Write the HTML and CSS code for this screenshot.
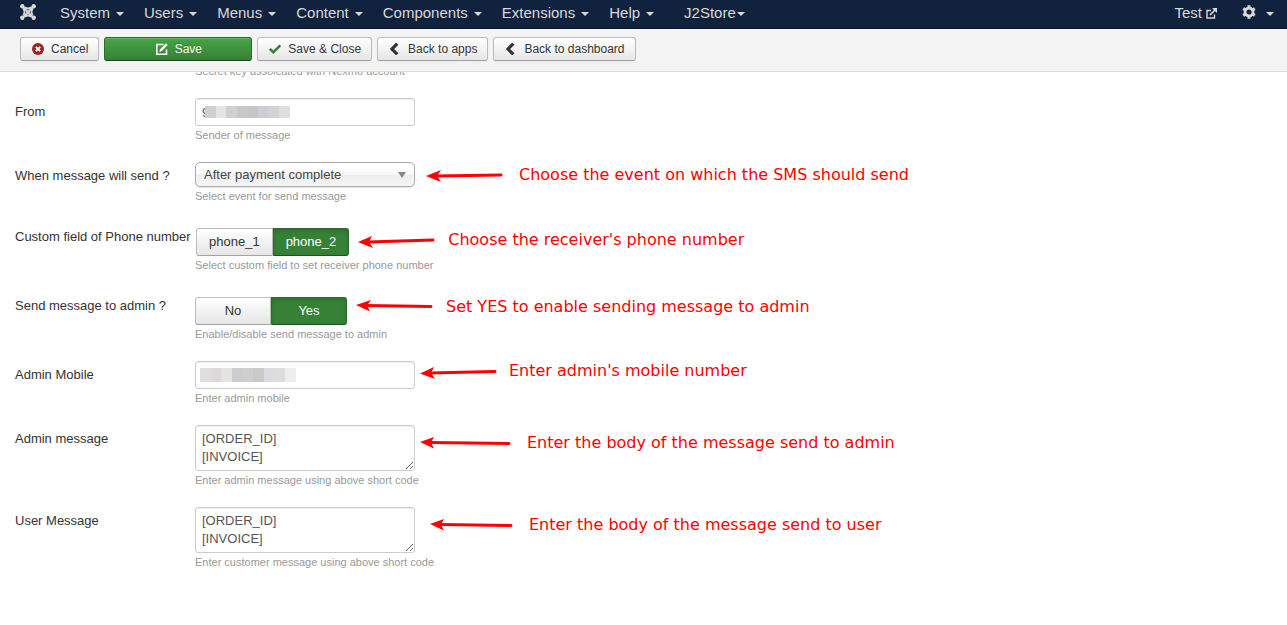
FILE: index.html
```html
<!DOCTYPE html>
<html lang="en">
<head>
<meta charset="utf-8">
<title>J2Store SMS settings</title>
<meta name="viewport" content="width=device-width, initial-scale=1">
<link rel="stylesheet" href="styles.css">
</head>
<body>
<svg class="defs" width="0" height="0" aria-hidden="true">
  <symbol id="chevron" viewBox="0 0 12 12"><path d="M8.3.6 3 6l5.300 5.400" fill="none" stroke="#333" stroke-width="3.200"/></symbol>
</svg>

<header class="navbar">
  <a class="brand" href="#" aria-label="Control panel">
    <svg width="16" height="16" viewBox="0 0 16 16" fill="none" stroke="#d9d9d9">
      <path d="M2.500 2.500 10 10.200q1.700 1.700 3.400 3.300M13.500 2.500 6 10.200q-1.700 1.700-3.400 3.300" stroke-width="2.200"/>
      <path d="M5 3.200Q8 5.800 11 3.200M5 12.800Q8 10.200 11 12.800M3.200 5Q5.800 8 3.200 11M12.800 5Q10.200 8 12.800 11" stroke-width="1.700"/>
      <g fill="#d9d9d9" stroke="none"><circle cx="2.300" cy="2.300" r="2.200"/><circle cx="13.700" cy="2.300" r="2.200"/><circle cx="2.300" cy="13.700" r="2.200"/><circle cx="13.700" cy="13.700" r="2.200"/></g>
    </svg>
  </a>
  <nav class="menu" aria-label="Main">
    <a href="#">System<span class="caret"></span></a>
    <a href="#">Users<span class="caret"></span></a>
    <a href="#">Menus<span class="caret"></span></a>
    <a href="#">Content<span class="caret"></span></a>
    <a href="#">Components<span class="caret"></span></a>
    <a href="#">Extensions<span class="caret"></span></a>
    <a href="#">Help<span class="caret"></span></a>
    <a class="menu-extra" href="#">J2Store<span class="caret"></span></a>
  </nav>
  <nav class="menu menu-end" aria-label="Site">
    <a class="site-link" href="#">Test
      <svg width="11" height="11" viewBox="0 0 11 11" fill="none" stroke="#d9d9d9" stroke-width="1.400"><path d="M5 2.500H1v7.500h7.500V6.500"/><path d="M4 7 9 2" stroke-width="1.700"/><path d="M6 0h5v5L9.300 3.300 7.700 1.700z" fill="#d9d9d9" stroke="none"/></svg>
    </a>
    <a class="user-link" href="#" aria-label="User menu">
      <svg width="14" height="14" viewBox="0 0 14 14"><circle cx="7" cy="7" r="4" fill="none" stroke="#d9d9d9" stroke-width="2.800"/><path d="M7 .3v2.500M7 11.200v2.500M1.200 3.600l2.200 1.300M10.600 9.100l2.200 1.300M1.200 10.400l2.200-1.300M10.600 4.900l2.200-1.300" stroke="#d9d9d9" stroke-width="3"/></svg>
      <span class="caret"></span>
    </a>
  </nav>
</header>

<div class="toolbar">
  <button class="btn" type="button"><svg width="12" height="12" viewBox="0 0 12 12"><circle cx="6" cy="6" r="6" fill="#942a25"/><path d="m3.800 3.800 4.400 4.400m0-4.400L3.800 8.200" stroke="#fff" stroke-width="1.900"/></svg>Cancel</button>
  <button class="btn btn-primary" type="button"><svg width="12" height="12" viewBox="0 0 12 12" fill="none" stroke="#fff"><path d="M7.500 1.500H.8v9.700h9.700V6.500" stroke-width="1.600"/><path d="M3.300 8.900 4 6.400 10 .3l1.700 1.700-6 6.100z" fill="#fff" stroke="none"/></svg>Save</button>
  <button class="btn" type="button"><svg width="12" height="12" viewBox="0 0 12 12"><path d="m.8 6 3.500 3.300 7-7" fill="none" stroke="#378137" stroke-width="2.600"/></svg>Save &amp; Close</button>
  <button class="btn" type="button"><svg width="12" height="12"><use href="#chevron"/></svg>Back to apps</button>
  <button class="btn" type="button"><svg width="12" height="12"><use href="#chevron"/></svg>Back to dashboard</button>
</div>

<main>
  <form class="settings">
    <div class="group">
      <p class="help help-first">Secret key assoicated with Nexmo account</p>
    </div>

    <div class="group">
      <label class="name" for="from">From</label>
      <div class="field">
        <div class="control">
          <input class="box" id="from" type="text" value="9">
          <span class="mask mask-from"><i></i><i></i><i></i><i></i><i></i><i></i><i></i><i></i></span>
        </div>
        <p class="help">Sender of message</p>
      </div>
    </div>

    <div class="group">
      <label class="name" for="event">When message will send ?</label>
      <div class="field">
        <div class="line">
          <div class="control">
            <select class="picker" id="event"><option>After payment complete</option></select>
            <svg class="picker-arrow" width="8" height="6" viewBox="0 0 8 6"><path d="M0 0h8L4 6z" fill="#888"/></svg>
          </div>
          <div class="note note-event">
            <svg width="77" height="20" viewBox="0 0 77 20"><path d="M10 11 75 10" class="shaft"/><path d="M0 11 15 5l-4 6 4 6z" class="tip"/></svg>
            <span>Choose the event on which the SMS should send</span>
          </div>
        </div>
        <p class="help">Select event for send message</p>
      </div>
    </div>

    <div class="group">
      <span class="name" id="phone-name">Custom field of Phone number</span>
      <div class="field field-toggle">
        <div class="line">
          <div class="toggle toggle-phone" role="radiogroup" aria-labelledby="phone-name">
            <input type="radio" name="phone" id="phone1"><label for="phone1">phone_1</label>
            <input type="radio" name="phone" id="phone2" checked><label for="phone2">phone_2</label>
          </div>
          <div class="note note-phone">
            <svg width="77" height="20" viewBox="0 0 77 20"><path d="M10 12 75 10" class="shaft"/><path d="M0 12 14 6l-3 6 4 6z" class="tip"/></svg>
            <span>Choose the receiver's phone number</span>
          </div>
        </div>
        <p class="help">Select custom field to set receiver phone number</p>
      </div>
    </div>

    <div class="group">
      <span class="name" id="admin-name">Send message to admin ?</span>
      <div class="field field-toggle">
        <div class="line">
          <div class="toggle" role="radiogroup" aria-labelledby="admin-name">
            <input type="radio" name="admin" id="admin-no"><label for="admin-no">No</label>
            <input type="radio" name="admin" id="admin-yes" checked><label for="admin-yes">Yes</label>
          </div>
          <div class="note note-admin">
            <svg width="77" height="20" viewBox="0 0 77 20"><path d="M10 8.500 75 9.500" class="shaft"/><path d="M0 8 15 3l-4 5.500 3 6z" class="tip"/></svg>
            <span>Set YES to enable sending message to admin</span>
          </div>
        </div>
        <p class="help">Enable/disable send message to admin</p>
      </div>
    </div>

    <div class="group">
      <label class="name" for="mobile">Admin Mobile</label>
      <div class="field">
        <div class="line">
          <div class="control">
            <input class="box" id="mobile" type="text">
            <span class="mask mask-mobile"><i></i><i></i><i></i><i></i><i></i><i></i><i></i><i></i><i></i></span>
          </div>
          <div class="note note-mobile">
            <svg width="77" height="20" viewBox="0 0 77 20"><path d="M10 12 75 10.500" class="shaft"/><path d="M0 12.500 14 6l-3 6 4 6z" class="tip"/></svg>
            <span>Enter admin's mobile number</span>
          </div>
        </div>
        <p class="help">Enter admin mobile</p>
      </div>
    </div>

    <div class="group">
      <label class="name" for="admin-message">Admin message</label>
      <div class="field">
        <div class="line">
          <textarea class="box" id="admin-message" rows="2">[ORDER_ID]
[INVOICE]</textarea>
          <div class="note note-message">
            <svg width="91" height="20" viewBox="0 0 91 20"><path d="M10 9.500 89 10.500" class="shaft"/><path d="M0 9 14 4l-3 5.500 3 6z" class="tip"/></svg>
            <span>Enter the body of the message send to admin</span>
          </div>
        </div>
        <p class="help">Enter admin message using above short code</p>
      </div>
    </div>

    <div class="group">
      <label class="name" for="user-message">User Message</label>
      <div class="field">
        <div class="line">
          <textarea class="box" id="user-message" rows="2">[ORDER_ID]
[INVOICE]</textarea>
          <div class="note note-user">
            <svg width="83" height="20" viewBox="0 0 83 20"><path d="M10 9.500 81 10.500" class="shaft"/><path d="M0 9 14 4l-3 5.500 3 6z" class="tip"/></svg>
            <span>Enter the body of the message send to user</span>
          </div>
        </div>
        <p class="help">Enter customer message using above short code</p>
      </div>
    </div>
  </form>
</main>
</body>
</html>
```

FILE: styles.css
```css
* {
  box-sizing: border-box;
}

body {
  margin: 0;
  background: #fff;
  color: #333;
  font: 13px/18px "Liberation Sans", Arial, sans-serif;
}

svg {
  display: block;
  flex: none;
}

.defs {
  position: absolute;
}

/* Top navigation */
.navbar {
  display: flex;
  align-items: flex-start;
  height: 29px;
  padding: 0 13px 0 20px;
  background: #10223e;
  border-bottom: 1px solid #0c192e;
}

.brand {
  padding: 4px 14px 0 0;
}

.menu {
  display: flex;
}

.menu a {
  display: flex;
  align-items: center;
  padding: 3px 10px 0;
  color: #d9d9d9;
  font-size: 15px;
  line-height: 20px;
  text-decoration: none;
  white-space: nowrap;
}

.menu a.menu-extra {
  margin-left: 10px;
}

.menu-end {
  margin-left: auto;
}

.menu a.site-link {
  gap: 4px;
  padding-right: 15px;
}

.menu a.user-link {
  padding: 0 0 0 10px;
}

.user-link .caret {
  margin: 4px 0 0 10px;
}

.caret {
  margin: 2px 0 0 6px;
  border: 4px solid transparent;
  border-top-color: #d9d9d9;
  border-bottom: 0;
}

.menu-extra .caret {
  margin-left: 1px;
}

/* Action toolbar */
.toolbar {
  position: relative;
  z-index: 1;
  display: flex;
  gap: 5px;
  padding: 8px 20px 10px;
  background: #f4f4f4;
  border-bottom: 1px solid #ddd;
}

.btn {
  display: flex;
  align-items: center;
  justify-content: center;
  gap: 7px;
  height: 24px;
  padding: 0 10px 0 11px;
  border: 1px solid #bbb;
  border-bottom-color: #a2a2a2;
  border-radius: 3px;
  background: linear-gradient(#fff, #e6e6e6);
  box-shadow: inset 0 1px 0 #fff, 0 1px 2px rgba(0, 0, 0, 0.05);
  color: #333;
  font: 12px/18px "Liberation Sans", Arial, sans-serif;
  text-shadow: 0 1px 1px rgba(255, 255, 255, 0.75);
  white-space: nowrap;
}

.btn-primary {
  width: 148px;
  border-color: #2d6a2d #2d6a2d #1c421c;
  background: linear-gradient(#46a546, #378137);
  box-shadow: inset 0 1px 0 rgba(255, 255, 255, 0.2);
  color: #fff;
  text-shadow: 0 -1px 0 rgba(0, 0, 0, 0.25);
}

/* Settings form, partly scrolled under the toolbar */
.settings {
  display: flex;
  flex-direction: column;
  gap: 18px;
  margin-top: -10px;
  padding: 0 15px 18px;
}

.group {
  display: flex;
}

.name {
  flex: none;
  width: 180px;
  padding-top: 5px;
  white-space: nowrap;
}

.field {
  flex: 1;
}

.field-toggle {
  padding-top: 5px;
}

.line {
  display: flex;
  align-items: flex-start;
}

.control {
  position: relative;
  flex: none;
  width: 220px;
}

.help {
  margin: 0;
  color: #999;
  font-size: 11px;
  line-height: 18px;
}

.help-first {
  margin-left: 180px;
}

.box {
  display: block;
  width: 220px;
  height: 28px;
  padding: 4px 6px;
  border: 1px solid #ccc;
  border-radius: 3px;
  background: #fff;
  box-shadow: inset 0 1px 1px rgba(0, 0, 0, 0.075);
  color: #555;
  font: 13px/18px "Liberation Sans", Arial, sans-serif;
}

textarea.box {
  flex: none;
  height: 46px;
  overflow: auto;
  resize: both;
}

.picker {
  display: block;
  width: 100%;
  height: 25px;
  padding: 0 24px 0 8px;
  border: 1px solid #aaa;
  border-radius: 5px;
  appearance: none;
  background: linear-gradient(#fff 20%, #f6f6f6 50%, #eee 52%, #f4f4f4 100%);
  box-shadow: inset 0 0 3px #fff, 0 1px 1px rgba(0, 0, 0, 0.1);
  color: #444;
  font: 13px/23px "Liberation Sans", Arial, sans-serif;
}

.picker-arrow {
  position: absolute;
  top: 10px;
  right: 9px;
  pointer-events: none;
}

/* Pixelated cover over private numbers */
.mask {
  position: absolute;
  display: flex;
}

.mask i {
  flex: 1;
}

.mask-from {
  top: 8px;
  left: 10px;
  width: 85px;
  height: 12px;
}

.mask-mobile {
  top: 7px;
  left: 5px;
  width: 96px;
  height: 14px;
}

.mask i:nth-child(1) { background: #cfcfd1; }
.mask i:nth-child(2) { background: #e5e4e1; }
.mask i:nth-child(3) { background: #d2d0ce; }
.mask i:nth-child(4) { background: #cac8ca; }
.mask i:nth-child(5) { background: #c7c5c6; }
.mask i:nth-child(6) { background: #cacfd3; }
.mask i:nth-child(7) { background: #d4d2d4; }
.mask i:nth-child(8) { background: #dbdddf; }
.mask-mobile i:nth-child(1) { background: #dededd; }
.mask-mobile i:nth-child(2) { background: #dbd9da; }
.mask-mobile i:nth-child(3) { background: #e3e3e1; }
.mask-mobile i:nth-child(4) { background: #cdcdcf; }
.mask-mobile i:nth-child(5) { background: #d0cfd0; }
.mask-mobile i:nth-child(6) { background: #cbcacb; }
.mask-mobile i:nth-child(7) { background: #dadcdf; }
.mask-mobile i:nth-child(8) { background: #dddddb; }
.mask-mobile i:nth-child(9) { background: #ededef; }

/* Two-way switches */
.toggle {
  position: relative;
  display: flex;
  flex: none;
}

.toggle-phone {
  margin-left: 1px;
}

.toggle input {
  position: absolute;
  opacity: 0;
  pointer-events: none;
}

.toggle label {
  min-width: 76px;
  padding: 4px 12px;
  border: 1px solid #bbb;
  border-bottom-color: #a2a2a2;
  border-radius: 3px 0 0 3px;
  background: linear-gradient(#fff, #e6e6e6);
  text-align: center;
}

.toggle label:last-child {
  border-radius: 0 3px 3px 0;
}

.toggle input:checked + label {
  border-color: #2d6a2d #2d6a2d #1c521c;
  background: #378137;
  box-shadow: inset 0 2px 4px rgba(0, 0, 0, 0.15);
  color: #fff;
}

/* Red callouts beside the fields */
.note {
  display: flex;
  gap: 16px;
  color: #f00;
  font: 16px/20px "DejaVu Sans", sans-serif;
  white-space: nowrap;
}

.note-event {
  padding: 3px 0 0 11px;
}

.note-phone {
  gap: 13px;
  padding: 2px 0 0 9px;
}

.note-admin {
  gap: 13px;
  padding-left: 9px;
}

.note-mobile {
  gap: 12px;
  padding-left: 5px;
}

.note-message {
  padding: 8px 0 0 5px;
}

.note-user {
  padding: 8px 0 0 15px;
}

.shaft {
  fill: none;
  stroke: #f00;
  stroke-width: 3;
  stroke-linecap: round;
}

.tip {
  fill: #f00;
}
```
